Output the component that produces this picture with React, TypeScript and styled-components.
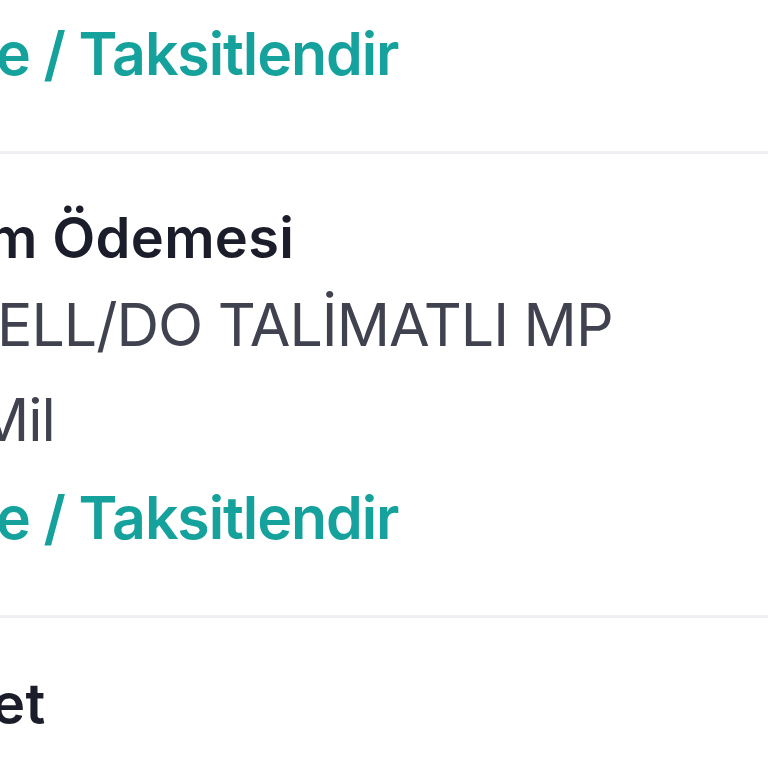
import React from "react";
import styled, { createGlobalStyle } from "styled-components";

const Global = createGlobalStyle`
  html, body {
    margin: 0;
    padding: 0;
    background: #ffffff;
    overflow: hidden;
  }
  body {
    font-family: Inter, "Noto Sans", "Liberation Sans", sans-serif;
    -webkit-font-smoothing: antialiased;
  }
`;

const Screen = styled.div`
  width: 768px;
  height: 768px;
  overflow: hidden;
  background: #ffffff;
  display: flex;
  flex-direction: column;
`;

const Section = styled.section<{ $top: number }>`
  display: flex;
  flex-direction: column;
  padding: ${(p) => p.$top}px 0 57px 0;
`;

const Divider = styled.div`
  height: 3px;
  background: #eff0f3;
  flex: none;
`;

const Line = styled.div<{ $cut: number; $gap?: number }>`
  white-space: nowrap;
  line-height: 80px;
  text-indent: ${(p) => -p.$cut}px;
  margin-top: ${(p) => p.$gap ?? 0}px;
`;

const ActionLink = styled(Line)`
  font-size: 59px;
  font-weight: 600;
  color: #15a29c;
  letter-spacing: -1.1px;
`;

const Title = styled(Line)`
  font-size: 56px;
  font-weight: 600;
  color: #1c1d2a;
  letter-spacing: 0.3px;
`;

const Detail = styled(Line)`
  font-size: 59px;
  font-weight: 400;
  color: #40424f;
  letter-spacing: -1px;
`;

export default function App() {
  return (
    <>
      <Global />
      <Screen>
        <Section $top={14}>
          <ActionLink $cut={4}>e / Taksitlendir</ActionLink>
        </Section>
        <Divider />
        <Section $top={44}>
          <Title $cut={13}>m Ödemesi</Title>
          <Detail $cut={3} $gap={7}>ELL/DO TALİMATLI MP</Detail>
          <Detail $cut={24} $gap={15}>Mil</Detail>
          <ActionLink $cut={4} $gap={18}>e / Taksitlendir</ActionLink>
        </Section>
        <Divider />
        <Section $top={46}>
          <Title $cut={8}>et</Title>
        </Section>
      </Screen>
    </>
  );
}
